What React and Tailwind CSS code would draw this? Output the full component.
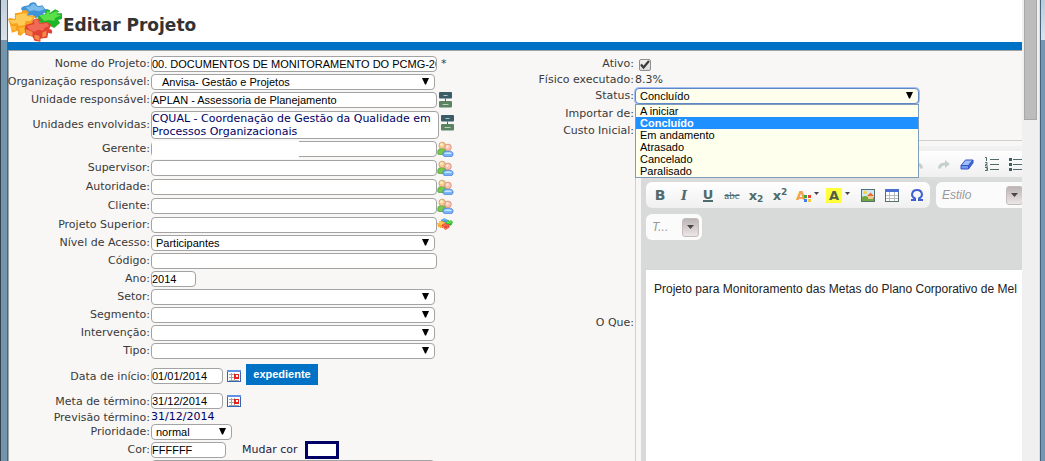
import React, { useState } from "react";

const statusOptions = [
  "A iniciar",
  "Concluído",
  "Em andamento",
  "Atrasado",
  "Cancelado",
  "Paralisado",
];

const fieldBase =
  "block h-4 rounded border border-[#a3a3a3] bg-white font-['Liberation_Sans',Arial,sans-serif] text-[11px] leading-[14px] text-black";

const PuzzleIcon = ({ className }) => (
  <svg viewBox="0 0 56 40" className={className} aria-hidden="true">
    {/* blue piece */}
    <path d="M16 4l5-1c1-4 8-4 8-1 0 2 3 2 6 1l3 4c3-1 4 2 1 3l-3 1 1 3-9 2-3-3-5 1-6-2 3-3c-4 0-5-4-1-5z" fill="#3f94d8" />
    <path d="M18 5l5-1c1-3 4-3 5-1s5 2 7 1l2 3-5 2-6-1-4 1z" fill="#7cbcec" />
    {/* green piece */}
    <path d="M31 14l7-2c-1-4 2-6 5-4l-1 3 6-4 4 2-2 2 5 0v6l-4 1 2 3-6 5-4-2-6 1-3-4-4-1z" fill="#1fb52b" />
    <path d="M32 13l7-1c0-3 2-4 3-2l0 2 7-3 2 1-2 2 5 1-6 3-1 3-5-1-5 1-3-3z" fill="#5be04a" />
    {/* yellow piece */}
    <path d="M0 17l2-1 5 1v-6l7-1c0-3 6-3 7 0l-1 3 8 1-3 5 2 4-3 8-8 0-3 3-3-1v-4l-6 2-2-9z" fill="#f6a01d" />
    <path d="M1 18l7 0v-5l8-2 3 0 0 3 7 1-3 4-5 0-1 4-6 1-2-3-5 1z" fill="#fdca58" />
    <path d="M3 24l5 0v5l-5-1zM11 26l6-1v6l-4 1z" fill="#ffb836" />
    {/* red piece */}
    <path d="M18 23l7-2c-1-5 6-6 8-3l-1 3 8-1 4 3-2 4c3 0 4 3 2 5l-3-1-1 5-7 1v3l-6-1-2-4-7-2-1-6z" fill="#e2422f" />
    <path d="M19 24l8-2-1-3c2-3 6-2 5 1l1 2 8-1 2 3-5 2-1 3-5-1-4 2-5-2z" fill="#f06a55" />
    <path d="M18 27l7 3v5l-7-3zM35 31l4-2v5l-4 2zM27 33l5 1v5l-5-2z" fill="#f48a4a" />
  </svg>
);

const UsersIcon = () => (
  <svg width="17" height="16" viewBox="0 0 17 16" className="shrink-0" aria-hidden="true">
    <path d="M.8 13V10Q1 7.500 5 7.500q3.500 0 4 3v3H2z" fill="#78c850" stroke="#4b9c3c" strokeWidth=".7" />
    <circle cx="5.200" cy="4.500" r="3.300" fill="#f5cd90" stroke="#c79050" strokeWidth=".7" />
    <path d="M6 14v-2.500Q6.300 10 11 10q4.700 0 5 2.500V14q-.6 1.600-2 1.600H8Q6.500 15.600 6 14z" fill="#76b5fb" stroke="#3b74d0" strokeWidth=".7" />
    <path d="M7.500 12q3.500-1.500 7 0v1h-7z" fill="#c8e4ff" />
    <circle cx="11" cy="6.400" r="3.300" fill="#f9c3b0" stroke="#d48270" strokeWidth=".7" />
    <circle cx="4.500" cy="3.700" r="1.400" fill="#fdeccb" />
    <circle cx="10.300" cy="5.600" r="1.400" fill="#fde6dc" />
  </svg>
);

const OrgIcon = () => (
  <svg width="14" height="16" viewBox="0 0 14 16" className="shrink-0" aria-hidden="true">
    <rect x="0" y="0" width="13" height="6.500" rx="1" fill="#3b5e66" />
    <path d="M4.500 3.500h4" stroke="#b5c6c9" />
    <path d="M6.500 6.500V9" stroke="#55635a" />
    <rect x="0" y="9" width="13" height="6.500" rx="1" fill="#5b8463" />
    <path d="M3.500 12.500h6" stroke="#b9d0bc" />
  </svg>
);

const CalendarIcon = () => (
  <svg width="14" height="12" viewBox="0 0 14 12" aria-hidden="true">
    <rect width="14" height="12" fill="#3465b8" />
    <path d="M0 0h14v2H0z" fill="#5f92e6" />
    <path d="M1 2h12v9H1z" fill="#fff" />
    <path d="M2 4h10v1H2zM2 7h10v1H2zM2 10h10v1H2zM4 3h1v8H4zM7 3h1v8H7z" fill="#a5a5a5" />
    <path d="M7 4h5v5H7z" fill="#e8231c" />
    <path d="M9 5h2v2H9z" fill="#fff" />
  </svg>
);

const Arrow = () => (
  <svg
    width="7"
    height="7"
    viewBox="0 0 7 7"
    className="pointer-events-none absolute right-1.5 top-1"
    aria-hidden="true"
  >
    <path d="M0 0h7L4 6.500H3z" fill="#000" />
  </svg>
);

const Label = ({ id, className = "leading-[15px]", children }) => (
  <label
    htmlFor={id}
    className={`flex w-[142px] shrink-0 justify-end whitespace-nowrap pr-px ${className}`}
  >
    {children}:
  </label>
);

const Row = ({ label, id, tall, children }) => (
  <div className={`flex items-start ${tall ? "h-[19px]" : "h-[18px]"}`}>
    <Label id={id}>{label}</Label>
    {children}
  </div>
);

const Text = ({ id, value = "", width = "w-[286px]", size = "" }) => (
  <input
    id={id}
    type="text"
    defaultValue={value}
    className={`${fieldBase} shrink-0 ${width} ${size}`}
  />
);

const Select = ({ id, value = "", width = "w-[284px]", pad = "pl-1" }) => (
  <div className={`relative shrink-0 ${width}`}>
    <select id={id} className={`${fieldBase} w-full appearance-none ${pad}`}>
      <option>{value}</option>
    </select>
    <Arrow />
  </div>
);

const IconButton = ({ title, className = "", children }) => (
  <button type="button" title={title} aria-label={title} className={`shrink-0 ${className}`}>
    {children}
  </button>
);

const ToolButton = ({ title, children }) => (
  <button
    type="button"
    title={title}
    aria-label={title}
    className="flex h-[18px] w-6 shrink-0 items-center justify-center text-[#4f6b6b]"
  >
    {children}
  </button>
);

const Combo = ({ label, width }) => (
  <button
    type="button"
    className={`flex h-[26px] shrink-0 items-center justify-between rounded-md bg-white/90 pl-1.5 pr-[3px] font-['Liberation_Sans',Arial,sans-serif] text-xs italic text-[#999] ${width}`}
  >
    {label}
    <span className="flex h-[19px] w-[17px] items-center justify-center rounded-[3px] border border-[#c4bcbc] bg-linear-to-b from-[#bdb5b5] to-[#ece6e6]">
      <svg width="7" height="4" viewBox="0 0 7 4" aria-hidden="true">
        <path d="M0 0h7L3.500 4z" fill="#4c4545" />
      </svg>
    </span>
  </button>
);

const SmallCaret = () => (
  <svg width="5" height="3" viewBox="0 0 5 3" className="mb-1 ml-[3px]" aria-hidden="true">
    <path d="M0 0h5L2.500 3z" fill="#444" />
  </svg>
);

const Editor = () => (
  <div className="w-[560px] shrink-0 border border-[#d0d0d0] p-[5px]">
    <div className="h-full bg-[#d8dada]">
      <div className="bg-linear-to-b from-[#f3f2f2] to-[#d8dada] to-30% pl-[5px] pt-[5px]">
        <div className="flex h-[31px] items-start">
          <div className="flex h-[26px] w-[420px] items-center rounded-md bg-linear-to-b from-white to-[#f0f0f0] pl-[259px]">
            <ToolButton title="Desfazer">
              <svg width="13" height="9" viewBox="0 0 13 9" aria-hidden="true">
                <path d="M0 4l5-4v2.500q7 0 7 6H9q0-3-4-3V8z" fill="#c6cfcf" />
              </svg>
            </ToolButton>
            <ToolButton title="Refazer">
              <svg width="13" height="9" viewBox="0 0 13 9" className="ml-1" aria-hidden="true">
                <path d="M13 4L8 0v2.500Q1 2.500 1 8.500h3q0-3 4-3V8z" fill="#c6cfcf" />
              </svg>
            </ToolButton>
            <ToolButton title="Remover formatação">
              <svg width="14" height="11" viewBox="0 0 14 11" className="ml-1" aria-hidden="true">
                <path d="M5.500 1H13L8.500 6.500H1z" fill="#9cc0fb" stroke="#3852c4" />
                <path d="M1 6.500h7.500V10H1z" fill="#6d9bf0" stroke="#3852c4" />
                <path d="M13 1v3L8.500 10V6.500z" fill="#4169dd" stroke="#3852c4" />
              </svg>
            </ToolButton>
            <ToolButton title="Lista numerada">
              <svg width="14" height="14" viewBox="0 0 14 14" className="ml-1.5" aria-hidden="true">
                <path d="M5 2.500h9M5 7.500h9M5 12.500h9" stroke="#4f6b6b" />
                <path d="M0 .5h1.500V4M0 5.500h2v2H.5v1.500H3M0 10.500h2.500v3H0M1 12h1" fill="none" stroke="#4f6b6b" />
              </svg>
            </ToolButton>
            <ToolButton title="Lista com marcadores">
              <svg width="14" height="13" viewBox="0 0 14 13" className="ml-1.5" aria-hidden="true">
                <path d="M0 0h3v3H0zM0 5h3v3H0zM0 10h3v3H0z" fill="#3f5f5f" />
                <path d="M4 1.500h10M4 6.500h10M4 11.500h10" stroke="#4f6b6b" />
              </svg>
            </ToolButton>
          </div>
        </div>

        <div className="flex h-8 items-start gap-1.5">
          <div className="flex h-[26px] w-[284px] shrink-0 items-center rounded-md bg-linear-to-b from-white to-[#f0f0f0] pl-0.5">
            <ToolButton title="Negrito">
              <b className="text-sm leading-none">B</b>
            </ToolButton>
            <ToolButton title="Itálico">
              <i className="font-['DejaVu_Serif',serif] text-[13px] font-bold leading-none">I</i>
            </ToolButton>
            <ToolButton title="Sublinhado">
              <span className="border-b-2 border-[#4f6b6b] text-[13px] font-bold leading-[11px]">U</span>
            </ToolButton>
            <ToolButton title="Tachado">
              <s className="font-['Liberation_Serif',serif] text-[11px] leading-none">abc</s>
            </ToolButton>
            <ToolButton title="Subscrito">
              <b className="text-[13px] leading-none">x<sub className="text-[9px]">2</sub></b>
            </ToolButton>
            <ToolButton title="Sobrescrito">
              <b className="text-[13px] leading-none">x<sup className="text-[9px]">2</sup></b>
            </ToolButton>
            <button type="button" title="Cor do texto" className="flex h-[18px] w-[31px] shrink-0 items-center justify-center">
              <b className="text-[13px] leading-none text-[#f2a248]">A</b>
              <svg width="7" height="7" viewBox="0 0 7 7" className="-ml-0.5 mt-1.5" aria-hidden="true">
                <path d="M0 0h3v3H0z" fill="#3aa53a" />
                <path d="M4 0h3v3H4z" fill="#f03c3c" />
                <path d="M0 4h3v3H0z" fill="#3c7cf0" />
                <path d="M4 4h3v3H4z" fill="#f8c83c" />
              </svg>
              <SmallCaret />
            </button>
            <button type="button" title="Cor de fundo" className="flex h-[18px] w-[30px] shrink-0 items-center justify-center">
              <b className="bg-[#ffff3c] px-[3px] text-[13px] leading-[15px] text-[#4f5b4b]">A</b>
              <SmallCaret />
            </button>
            <ToolButton title="Imagem">
              <svg width="14" height="13" viewBox="0 0 14 13" className="ml-1.5" aria-hidden="true">
                <rect x=".5" y=".5" width="13" height="12" fill="#cfe8f8" stroke="#55706e" />
                <path d="M1 8q3-2 6 0t6 0v4H1z" fill="#6fa83e" />
                <path d="M6 7l3.500-3.500L13 7z" fill="#e8702c" />
                <path d="M7 7h5v3H7z" fill="#f5c890" />
                <circle cx="4" cy="3.500" r="1.800" fill="#ffd23e" />
              </svg>
            </ToolButton>
            <ToolButton title="Tabela">
              <svg width="14" height="13" viewBox="0 0 14 13" className="ml-1.5" aria-hidden="true">
                <rect x=".5" y=".5" width="13" height="12" fill="#fff" stroke="#55706e" />
                <path d="M0 0h14v3H0z" fill="#4a6fd0" />
                <path d="M1 6.500h12M1 9.500h12M4.500 3v9M9.500 3v9" stroke="#b5bcbc" />
              </svg>
            </ToolButton>
            <ToolButton title="Caractere especial">
              <svg width="14" height="12" viewBox="0 0 14 12" className="ml-2" aria-hidden="true">
                <path d="M1 11h4V9.500Q2 8 2 5.500 2.500 1 7 1t5 4.500Q12 8 9 9.500V11h4" fill="none" stroke="#3f5fd0" strokeWidth="2" />
              </svg>
            </ToolButton>
          </div>
          <Combo label="Estilo" width="w-[90px]" />
        </div>

        <div className="h-14">
          <Combo label="T..." width="w-14" />
        </div>
      </div>
      <div className="ml-[5px] min-h-[230px] bg-white px-2 pt-2.5 font-['Liberation_Sans',Arial,sans-serif] text-xs leading-[18px] text-[#222]">
        <p className="whitespace-nowrap">
          Projeto para Monitoramento das Metas do Plano Corporativo de Mel
        </p>
      </div>
    </div>
  </div>
);

const StatusSelect = () => {
  const [status, setStatus] = useState("Concluído");

  return (
    <div className="relative w-[284px] shrink-0 font-['Liberation_Sans',Arial,sans-serif] text-[11px] text-black">
      <select
        id="status"
        value={status}
        onChange={(e) => setStatus(e.target.value)}
        className="block h-4 w-full appearance-none rounded border border-[#5f86c6] bg-[#ffffee] pl-1 leading-[14px] ring-1 ring-[#a4c0f4]"
      >
        {statusOptions.map((option) => (
          <option key={option}>{option}</option>
        ))}
      </select>
      <Arrow />
      <ul
        role="listbox"
        aria-label="Status"
        className="absolute left-0 top-full z-10 w-full border border-[#7f9db9] bg-[#ffffee]"
      >
        {statusOptions.map((option) => (
          <li
            key={option}
            role="option"
            aria-selected={option === status}
            onClick={() => setStatus(option)}
            className={`h-3 pl-1 leading-3 ${
              option === status ? "bg-[#1e90ff] font-bold text-white" : ""
            }`}
          >
            {option}
          </li>
        ))}
      </ul>
    </div>
  );
};

const rightLabel = "w-[120px] shrink-0 pr-px text-right";

const App = () => {
  return (
    <div className="flex h-screen overflow-hidden bg-white font-['DejaVu_Sans',Verdana,sans-serif] text-[11px] text-[#3a3a3a]">
      {/* Window frame, left side */}
      <div className="w-2 shrink-0 border-x border-l-[#35414d] border-r-[#4d6577] bg-[#7295ae]">
        <div className="h-10 bg-linear-to-b from-[#c2d0dc] to-[#dae2ea]" />
      </div>

      <main className="min-w-0 flex-1 overflow-hidden">
        <header className="flex h-[50px] items-start border-b-8 border-[#0072c6]">
          <PuzzleIcon className="mt-0.5 h-10 w-[55px] shrink-0" />
          <h1 className="pt-3.5 text-[17px] font-bold leading-[22px] text-[#333]">Editar Projeto</h1>
        </header>

        <form className="flex border-l border-t border-[#a3a3a3] bg-[#f8f7f6]">
          <div className="w-[506px] shrink-0 pt-[5px]">
            <Row label="Nome do Projeto" id="nome">
              <Text id="nome" value="00. DOCUMENTOS DE MONITORAMENTO DO PCMG-20" size="text-xs" />
              <span className="pl-1">*</span>
            </Row>
            <Row label="Organização responsável" id="organizacao">
              <Select id="organizacao" value="Anvisa- Gestão e Projetos" pad="pl-2.5" />
            </Row>
            <Row label="Unidade responsável" id="unidade" tall>
              <Text id="unidade" value="APLAN - Assessoria de Planejamento" />
              <IconButton title="Selecionar unidade" className="ml-0.5"><OrgIcon /></IconButton>
            </Row>
            <div className="flex h-[30px] items-start">
              <Label id="envolvidas" className="leading-7">Unidades envolvidas</Label>
              <output
                id="envolvidas"
                className="block h-7 w-72 shrink-0 overflow-hidden whitespace-nowrap rounded border border-[#a3a3a3] bg-white leading-[13px] text-[#000066]"
              >
                CQUAL - Coordenação de Gestão da Qualidade em
                <br />
                Processos Organizacionais
              </output>
              <IconButton title="Selecionar unidades" className="ml-0.5 mt-1"><OrgIcon /></IconButton>
            </div>
            <Row label="Gerente" id="gerente" tall>
              <div className="relative shrink-0">
                <Text id="gerente" />
                <span className="absolute left-px top-0 h-[18px] w-[147px] bg-white" />
              </div>
              <IconButton title="Selecionar gerente"><UsersIcon /></IconButton>
            </Row>
            <Row label="Supervisor" id="supervisor" tall>
              <Text id="supervisor" />
              <IconButton title="Selecionar supervisor"><UsersIcon /></IconButton>
            </Row>
            <Row label="Autoridade" id="autoridade" tall>
              <Text id="autoridade" />
              <IconButton title="Selecionar autoridade"><UsersIcon /></IconButton>
            </Row>
            <Row label="Cliente" id="cliente" tall>
              <Text id="cliente" />
              <IconButton title="Selecionar cliente"><UsersIcon /></IconButton>
            </Row>
            <Row label="Projeto Superior" id="superior">
              <Text id="superior" />
              <IconButton title="Selecionar projeto"><PuzzleIcon className="h-3.5 w-4" /></IconButton>
            </Row>
            <Row label="Nível de Acesso" id="acesso">
              <Select id="acesso" value="Participantes" />
            </Row>
            <Row label="Código" id="codigo"><Text id="codigo" /></Row>
            <Row label="Ano" id="ano"><Text id="ano" value="2014" width="w-[45px]" /></Row>
            <Row label="Setor" id="setor"><Select id="setor" /></Row>
            <Row label="Segmento" id="segmento"><Select id="segmento" /></Row>
            <Row label="Intervenção" id="intervencao"><Select id="intervencao" /></Row>
            <Row label="Tipo" id="tipo"><Select id="tipo" /></Row>

            <div className="flex h-[30px] items-center">
              <Label id="inicio">Data de início</Label>
              <Text id="inicio" value="01/01/2014" width="w-[72px]" />
              <IconButton title="Calendário" className="ml-1"><CalendarIcon /></IconButton>
              <button
                type="button"
                className="mb-1 ml-[5px] h-[21px] w-[72px] bg-[#0072c6] font-['Liberation_Sans',Arial,sans-serif] font-bold text-white"
              >
                expediente
              </button>
            </div>
            <div className="flex h-5 items-center">
              <Label id="termino">Meta de término</Label>
              <Text id="termino" value="31/12/2014" width="w-[72px]" />
              <IconButton title="Calendário" className="ml-1"><CalendarIcon /></IconButton>
            </div>
            <div className="flex h-[13px] items-center">
              <Label>Previsão término</Label>
              <span className="text-[#000066]">31/12/2014</span>
            </div>
            <Row label="Prioridade" id="prioridade">
              <Select id="prioridade" value="normal" width="w-[81px]" />
            </Row>
            <Row label="Cor" id="cor">
              <Text id="cor" value="FFFFFF" width="w-[75px]" size="text-xs" />
              <a href="#cor" className="ml-4 flex h-4 items-center gap-[7px] text-[#222244]">
                Mudar cor
                <span className="h-[18px] w-[34px] border-3 border-[#000066] bg-white" />
              </a>
            </Row>
            <div className="pl-[142px]">
              <textarea
                aria-label="Descrição"
                rows={2}
                className="block w-[284px] rounded border border-[#a3a3a3] bg-white"
              />
            </div>
          </div>

          <div className="min-w-0 flex-1 overflow-hidden pt-[5px]">
            <div className="flex h-[17px] items-center">
              <label htmlFor="ativo" className={rightLabel}>Ativo:</label>
              <input
                id="ativo"
                type="checkbox"
                defaultChecked
                className="peer ml-1 h-3 w-3 shrink-0 appearance-none rounded-xs border border-[#8f8f8f] bg-linear-to-b from-[#f0f0f0] to-[#dcdcdc]"
              />
              <svg
                width="10"
                height="9"
                viewBox="0 0 10 9"
                className="pointer-events-none invisible -ml-[11px] shrink-0 peer-checked:visible"
                aria-hidden="true"
              >
                <path d="M1 4.500l2.500 3L9 1" fill="none" stroke="#3a3a3a" strokeWidth="2.200" />
              </svg>
            </div>
            <div className="flex h-[14px] items-center">
              <span className={rightLabel}>Físico executado:</span>
              <span>8.3%</span>
            </div>
            <div className="flex h-[18px] items-center">
              <label htmlFor="status" className={rightLabel}>Status:</label>
              <StatusSelect />
            </div>
            <div className="flex h-[18px] items-center">
              <span className={rightLabel}>Importar de:</span>
            </div>
            <div className="flex h-[17px] items-center">
              <span className={rightLabel}>Custo Inicial:</span>
            </div>
            <div className="flex items-stretch">
              <span className={`${rightLabel} self-center`}>O Que:</span>
              <Editor />
            </div>
          </div>
        </form>
      </main>

      {/* Scrollbar */}
      <div className="w-[17px] shrink-0 bg-[#f0f0f0] px-0.5">
        <div className="h-[120px] border border-t-0 border-[#a8a8a8] bg-[#bcbcbc]" />
      </div>

      {/* Window frame, right side */}
      <div className="w-1.5 shrink-0 border-l border-[#dcdfe2] bg-[#7597b1]">
        <div className="h-full border-l border-[#47637b]">
          <div className="h-10 bg-linear-to-b from-[#bccad8] to-[#dce3ea]" />
        </div>
      </div>
    </div>
  );
};

export default App;
